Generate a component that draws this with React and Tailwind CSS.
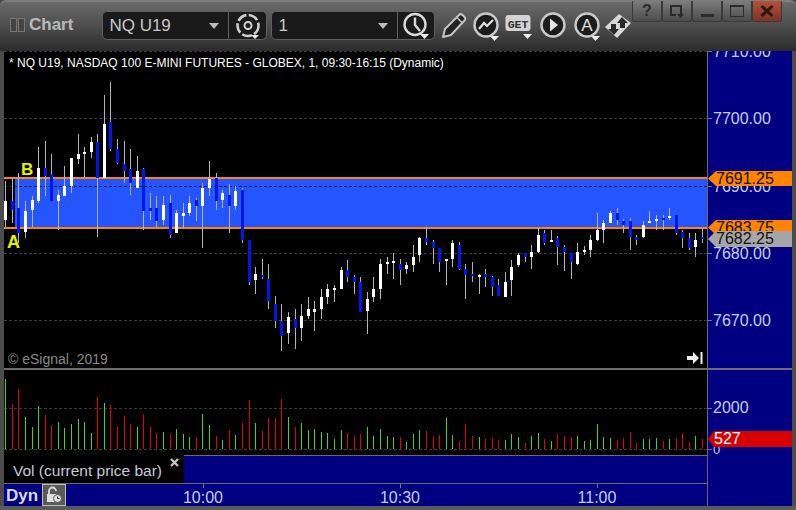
const W = 'w'
const B = 'b'

// read off the chart in crops: [wickTop, wickBottom, bodyTop, bodyBottom, colour]
const seg1 = [
  [303,440,363,420,W],[294,430,363,390,B],[279,490,384,459,B],[363,474,393,456,W],[348,442,360,390,W],
  [201,369,264,363,W],[183,348,264,288,B],[222,363,282,363,B],[331,450,345,363,W],[258,348,318,348,W],
  [234,340,234,318,W],[162,252,222,237,W],[201,292,216,222,W],[171,234,186,216,W],[162,471,186,294,B],
  [45,294,132,294,W],[6,213,126,207,B],[177,252,207,249,B],[183,309,252,273,B],[207,345,267,309,B],
  [228,324,273,324,W],[264,450,267,393,B],[339,420,384,393,B],[348,441,384,423,B],[348,435,375,420,W],
  [345,474,369,465,B],[390,459,399,459,W],[369,444,399,408,W],[348,408,369,399,W],[354,423,360,378,B],
  [309,504,324,378,W],[243,348,297,324,W],[279,390,294,363,B],[330,384,339,360,W],[312,459,345,378,B],
  [318,390,333,378,W],[324,489,330,480,B],
].map(([a, b, c, d, e]) => [80 + a / 3, 80 + b / 3, 80 + c / 3, 80 + d / 3, e])

const seg2 = [
  [210,345,210,336,B],[291,372,312,330,W],[267,327,315,321,B],[282,417,327,393,B],[378,474,402,453,B],
  [402,543,453,498,B],[426,522,441,489,W],[417,537,447,474,B],[402,513,438,474,W],[381,447,417,438,W],
  [393,483,417,426,W],[357,447,381,417,W],[342,402,357,381,W],[345,396,354,360,W],[291,357,300,357,W],
  [270,336,300,321,B],[315,372,321,336,B],[321,426,336,426,B],[366,492,387,423,W],[321,396,357,381,W],
  [267,387,282,357,W],[261,312,276,282,W],[249,327,273,279,W],[267,345,282,300,B],[276,312,285,297,W],
  [225,306,261,285,W],[201,276,204,255,W],[171,225,204,216,B],[210,282,216,234,B],[234,306,234,276,B],
  [267,345,267,273,W],[210,291,219,267,W],[216,300,225,297,B],[282,387,297,315,B],[276,336,312,318,B],
  [312,372,315,321,W],[297,351,312,321,B],[318,378,321,351,B],[327,378,345,378,B],[306,378,336,381,W],
  [270,378,291,330,W],
].map(([a, b, c, d, e]) => [170 + a / 3, 170 + b / 3, 170 + c / 3, 170 + d / 3, e])

const seg3 = [
  [249,291,255,285,W],[249,276,249,261,B],[225,297,246,261,W],[174,249,195,246,W],[180,225,189,219,B],
  [180,216,210,216,W],[198,285,204,231,B],[225,303,231,246,B],[249,327,249,276,B],[219,285,246,282,W],
  [228,255,240,246,W],[195,261,210,240,W],[129,213,180,210,W],[150,219,159,180,W],[123,159,129,159,W],
  [114,165,129,150,B],[147,189,153,165,B],[144,240,153,201,B],[195,225,201,210,B],[153,204,165,201,W],
  [123,159,153,159,W],[135,180,147,153,W],[135,180,144,150,B],[114,150,138,144,W],[135,195,135,189,B],
  [180,234,186,204,B],[189,240,204,234,B],[189,261,210,231,W],[174,219,201,207,B],
].map(([a, b, c, d, e]) => [170 + a / 3, 170 + b / 3, 170 + c / 3, 170 + d / 3, e])

const candles = [...seg1, ...seg2, ...seg3]

const vol = [
  [118,'g'],[192,'r'],[148,'r'],[232,'g'],[261,'g'],[198,'g'],[225,'r'],[255,'r'],[246,'g'],[264,'g'],
  [252,'g'],[237,'g'],[246,'g'],[279,'g'],[171,'r'],[189,'g'],[195,'r'],[261,'r'],[228,'r'],[252,'r'],
  [261,'g'],[222,'r'],[261,'r'],[279,'r'],[276,'g'],[282,'r'],[267,'g'],[282,'g'],[291,'g'],[291,'r'],
  [222,'g'],[255,'g'],[288,'r'],[300,'g'],[270,'r'],[285,'g'],[249,'r'],[180,'r'],[249,'g'],[273,'r'],
  [234,'r'],[234,'r'],[177,'r'],[231,'g'],[261,'r'],[249,'g'],[270,'g'],[267,'g'],[276,'g'],[279,'g'],
  [297,'g'],[270,'g'],[279,'r'],[288,'r'],[282,'r'],[261,'g'],[288,'g'],[267,'g'],[288,'g'],[291,'g'],
  [291,'r'],[306,'g'],[282,'g'],[270,'g'],[273,'r'],[288,'r'],[285,'r'],[234,'g'],[285,'g'],[303,'r'],
  [252,'r'],[288,'r'],[291,'g'],[297,'r'],[294,'r'],[300,'r'],[300,'g'],[282,'g'],[291,'g'],[309,'r'],
  [288,'g'],[279,'g'],[297,'r'],[303,'g'],[282,'r'],[288,'r'],[291,'r'],[288,'g'],[303,'g'],[300,'g'],
  [252,'g'],[291,'g'],[294,'g'],[300,'r'],[294,'r'],[276,'r'],[309,'r'],[297,'g'],[297,'g'],[294,'g'],
  [303,'r'],[297,'g'],[294,'r'],[279,'r'],[306,'r'],[288,'g'],[297,'r'],
]

const col = (i) => Math.floor(5.8 + 6.5733 * i)
const fr = (n) => Math.round(n)

function CircleBtn({ children, className }) {
  return (
    <svg width="28" height="30" viewBox="0 0 28 30" className={className}>
      <circle cx="13" cy="13" r="11.5" fill="#1c1c1c" stroke="#c9c9c9" strokeWidth="2.4" />
      {children}
      <path d="M17 24h9l-4.5 5z" fill="#eee" />
    </svg>
  )
}

function Tag({ top, bg, text, color = 'text-[#111]', h = 'h-[15px]', arrow = 'w-[8px]' }) {
  return (
    <div className={`absolute left-0 right-0 flex items-center ${h}`} style={{ top }}>
      <svg viewBox="0 0 9 15" className={`h-full shrink-0 ${arrow}`} preserveAspectRatio="none">
        <path d="M0 7.5 9 0v15z" fill={bg} />
      </svg>
      <div className={`flex h-full flex-1 items-center overflow-hidden text-[16px] ${color}`} style={{ background: bg }}>
        {text}
      </div>
    </div>
  )
}

function WinBtn({ children, red }) {
  return (
    <div
      className={`flex h-[21px] w-[30px] items-center justify-center rounded-b-[3px] border border-t-0 border-[#3a3a3a] ${
        red ? 'bg-gradient-to-b from-[#b5523c] to-[#7e3324]' : 'bg-gradient-to-b from-[#7c7c7c] to-[#4c4c4c]'
      }`}
    >
      {children}
    </div>
  )
}

function AxisLabel({ y, children }) {
  return (
    <div className="absolute left-[5px] flex h-[18px] items-center text-[16px] leading-none text-[#c6cde6]" style={{ top: y - 9 }}>
      {children}
    </div>
  )
}

function Tick({ y }) {
  return <div className="absolute left-0 h-px w-[4px] bg-[#777]" style={{ top: y }} />
}

export default function App() {
  return (
    <div className="flex h-[510px] w-[796px] flex-col overflow-hidden bg-[#4c4c4c] font-['Liberation_Sans',Arial,sans-serif]">
      {/* title bar */}
      <div className="relative flex h-[51px] shrink-0 items-start rounded-t-[6px] border-t-2 border-[#7d7d7d] bg-gradient-to-b from-[#6a6a6a] via-[#4d4d4d] to-[#2b2b2b]">
        <div className="ml-[10px] mt-[16px] flex gap-[1px]">
          <div className="h-[14px] w-[7px] border border-[#777] bg-[#444]" />
          <div className="h-[14px] w-[7px] border border-[#777] bg-[#444]" />
        </div>
        <div className="ml-[4px] mt-[13px] text-[17px] font-bold leading-[20px] text-[#b9b9b9]">Chart</div>

        <div className="ml-[29px] mt-[9px] flex h-[29px] w-[165px] items-stretch rounded-[5px] border border-[#5f5f5f] bg-[#1a1a1a]">
          <div className="flex w-[126px] items-center justify-between border-r border-[#5f5f5f] pl-[6px] pr-[9px] text-[17px] text-[#c9c9c9]">
            NQ U19
            <svg width="10" height="6" viewBox="0 0 10 6"><path d="M0 0h10L5 6z" fill="#bbb" /></svg>
          </div>
          <div className="flex flex-1 items-center justify-center">
            <svg width="26" height="26" viewBox="0 0 26 26">
              <circle cx="13" cy="12.5" r="10.5" fill="none" stroke="#d0d0d0" strokeWidth="2.6" strokeDasharray="10 2.5" />
              <circle cx="13" cy="12.5" r="3.5" fill="none" stroke="#d0d0d0" strokeWidth="2" />
              <path d="M16 22h8l-4 4z" fill="#eee" />
            </svg>
          </div>
        </div>

        <div className="ml-[4px] mt-[9px] flex h-[29px] w-[164px] items-stretch rounded-[5px] border border-[#5f5f5f] bg-[#1a1a1a]">
          <div className="flex w-[126px] items-center justify-between border-r border-[#5f5f5f] pl-[6px] pr-[9px] text-[17px] text-[#c9c9c9]">
            1
            <svg width="10" height="6" viewBox="0 0 10 6"><path d="M0 0h10L5 6z" fill="#bbb" /></svg>
          </div>
          <div className="flex flex-1 items-center justify-center">
            <svg width="30" height="28" viewBox="0 0 30 28">
              <circle cx="14" cy="12.5" r="10.5" fill="none" stroke="#d8d8d8" strokeWidth="2.4" />
              <path d="M14 5.5V13l5 6" fill="none" stroke="#d8d8d8" strokeWidth="2.4" />
              <path d="M19 22h9l-4.5 5z" fill="#eee" />
            </svg>
          </div>
        </div>

        <svg width="28" height="28" viewBox="0 0 28 28" className="ml-[5px] mt-[10px]">
          <path d="M3 25l2-8L19 3c1-1 2.500-1 3.500 0l2 2c1 1 1 2.500 0 3.500L11 23z" fill="#222" stroke="#c4c4c4" strokeWidth="2" strokeLinejoin="round" />
          <path d="M17 5.500l5.500 5.500" stroke="#c4c4c4" strokeWidth="1.500" />
        </svg>

        <CircleBtn className="ml-[5px] mt-[10px]">
          <path d="M6 17l5-6 3 3 6-6" fill="none" stroke="#e0e0e0" strokeWidth="2.2" />
        </CircleBtn>

        <svg width="30" height="30" viewBox="0 0 30 30" className="ml-[4px] mt-[10px]">
          <rect x="0.500" y="3" width="25" height="16" rx="3" fill="#d2d2d2" />
          <text x="13" y="15.500" textAnchor="middle" fontSize="11.500" fontWeight="700" fontFamily="Liberation Mono, monospace" fill="#333">GET</text>
          <path d="M18 22h9l-4.500 5z" fill="#eee" />
        </svg>

        <svg width="28" height="28" viewBox="0 0 28 28" className="ml-[5px] mt-[10px]">
          <circle cx="13" cy="13" r="11.500" fill="#1c1c1c" stroke="#c9c9c9" strokeWidth="2.400" />
          <path d="M10 6.500l8 6.500-8 6.500z" fill="#e4e4e4" />
        </svg>

        <CircleBtn className="ml-[6px] mt-[10px]">
          <text x="13" y="19" textAnchor="middle" fontSize="17" fontFamily="Liberation Sans, sans-serif" fill="#e0e0e0">A</text>
        </CircleBtn>

        <svg width="28" height="26" viewBox="0 0 28 26" className="ml-[2px] mt-[11px]">
          <path d="M1 14 15 1l12 9-14 15z" fill="#d8d8d8" />
          <path d="M18 4l6 6h-3v5h-5v-5h-3z" fill="#2a2a2a" />
          <path d="M10 22l-6-6h3v-5h5v5h3z" fill="#2a2a2a" />
        </svg>

        {/* window buttons */}
        <div className="absolute left-[632px] top-[-1px] flex">
          <WinBtn><span className="text-[16px] font-bold leading-none text-[#2b2b2b]">?</span></WinBtn>
          <WinBtn>
            <svg width="16" height="15" viewBox="0 0 16 15">
              <path d="M12 10V2H2v9h5" fill="none" stroke="#2b2b2b" strokeWidth="2" />
              <path d="M8 10h7l-3.500 4z" fill="#2b2b2b" />
            </svg>
          </WinBtn>
          <WinBtn><div className="mt-[8px] h-[3px] w-[13px] bg-[#2b2b2b]" /></WinBtn>
          <WinBtn><div className="h-[12px] w-[14px] border border-t-2 border-[#2b2b2b]" /></WinBtn>
          <WinBtn red>
            <svg width="14" height="12" viewBox="0 0 14 12"><path d="M1.500 1 12.500 11M12.500 1 1.500 11" stroke="#2d1712" strokeWidth="3" /></svg>
          </WinBtn>
        </div>
      </div>

      <div className="flex flex-1 pl-[4px] pr-[4px]">
        <div className="flex flex-1 flex-col">
          {/* price panel */}
          <div className="flex h-[317px] shrink-0">
            <div className="relative h-full w-[703px] shrink-0 overflow-hidden bg-black">
              <svg width="703" height="317" viewBox="4 51 703 317" shapeRendering="crispEdges" className="block">
                <rect x="15" y="179" width="692" height="48" fill="#2455ff" />
                {[51, 118, 186, 253, 320].map((y) => (
                  <line key={y} x1="4" x2="707" y1={y + 0.5} y2={y + 0.5} stroke={y === 186 ? '#222' : '#3a3a3a'} strokeDasharray="3 2" />
                ))}
                <rect x="4" y="177" width="703" height="2" fill="#ff8400" />
                <rect x="4" y="227" width="703" height="2" fill="#ff8400" />
                {candles.map(([wt, wb, bt, bb, c], i) => {
                  const x = col(i)
                  return (
                    <g key={i}>
                      <rect x={x} y={fr(wt)} width="1" height={fr(wb) - fr(wt)} fill="#b4b4b4" />
                      <rect x={x - 1} y={fr(bt)} width="3" height={Math.max(fr(bb) - fr(bt), 2)} fill={c === W ? '#fff' : '#0018e6'} />
                    </g>
                  )
                })}
              </svg>
              <div className="absolute left-[5px] top-[5px] text-[12px] leading-[14px] text-white">
                * NQ U19, NASDAQ 100 E-MINI FUTURES - GLOBEX, 1, 09:30-16:15 (Dynamic)
              </div>
              <div className="absolute left-[17px] top-[109px] text-[17px] font-bold leading-[20px] text-[#e6f000]">B</div>
              <div className="absolute left-[3px] top-[181px] text-[18px] font-bold leading-[20px] text-[#e6f000]">A</div>
              <div className="absolute bottom-[1px] left-[4px] text-[14px] leading-[16px] text-[#8a8a8a]">© eSignal, 2019</div>
              <svg width="16" height="14" viewBox="0 0 16 14" className="absolute bottom-[3px] right-[4px]">
                <path d="M0 5h6V1l6 6-6 6V9H0z" fill="#eee" />
                <rect x="13.500" y="1" width="2" height="12" fill="#eee" />
              </svg>
            </div>
            <div className="relative h-full flex-1 overflow-hidden border-l border-[#6a6a6a] bg-[#000080]">
              {[118, 186, 253, 320].map((y) => <Tick key={y} y={y - 51} />)}
              <Tick y={0} />
              <AxisLabel y={1}>7710.00</AxisLabel>
              <AxisLabel y={68}>7700.00</AxisLabel>
              <AxisLabel y={136}>7690.00</AxisLabel>
              <AxisLabel y={203}>7680.00</AxisLabel>
              <AxisLabel y={270}>7670.00</AxisLabel>
              <Tag top={120} bg="#ff8400" text="7691.25" />
              <Tag top={169} bg="#ff8400" text="7683.75" />
              <Tag top={180} bg="#a6a6a8" text="7682.25" h="h-[16px]" />
            </div>
          </div>

          <div className="h-[2px] shrink-0 bg-[#6e6e6e]" />

          {/* volume panel */}
          <div className="flex flex-1">
            <div className="flex w-[703px] shrink-0 flex-col">
              <svg width="703" height="85" viewBox="4 370 703 85" shapeRendering="crispEdges" className="block shrink-0 bg-black">
                {[408, 449].map((y) => (
                  <line key={y} x1="4" x2="707" y1={y + 0.5} y2={y + 0.5} stroke="#3a3a3a" strokeDasharray="3 2" />
                ))}
                {vol.map(([t, c], i) => {
                  const top = Math.round(340 + t / 3)
                  return <rect key={i} x={col(i)} y={top} width="1" height={449 - top} fill={c === 'g' ? '#45d612' : '#e80000'} />
                })}
              </svg>
              <div className="flex h-[29px] shrink-0 border-b border-[#6a6a6a]">
                <div className="relative w-[180px] shrink-0 bg-black">
                  <div className="pl-[9px] pt-[7px] text-[15.5px] leading-[17px] text-[#c8cbd6]">Vol (current price bar)</div>
                  <svg width="9" height="9" viewBox="0 0 9 9" className="absolute right-[5px] top-[3px]">
                    <path d="M1 1l7 7M8 1 1 8" stroke="#c4c4c4" strokeWidth="2.400" />
                  </svg>
                </div>
                <div className="flex-1 border-t border-[#6a6a6a] bg-[#000080]" />
              </div>
              <div className="relative h-[22px] shrink-0 bg-[#000080]">
                <div className="flex h-full items-center pl-[2px]">
                  <span className="text-[17px] font-bold leading-none text-[#d8d8d8]">Dyn</span>
                  <div className="ml-[4px] flex h-[22px] w-[24px] items-center justify-center border border-[#bdbdbd] bg-[#5a5a5a]">
                    <svg width="18" height="18" viewBox="0 0 18 18">
                      <path d="M4 8V5a3.500 3.500 0 0 1 7 0" fill="none" stroke="#ddd" strokeWidth="1.800" />
                      <rect x="2" y="8" width="9" height="8" fill="#ddd" />
                      <circle cx="12.500" cy="12.500" r="4" fill="#ddd" stroke="#5a5a5a" />
                      <path d="M12.500 10.500v2h2" fill="none" stroke="#333" />
                    </svg>
                  </div>
                </div>
                {[['10:00', 199], ['10:30', 396], ['11:00', 593]].map(([t, x]) => (
                  <div key={t} className="absolute top-0 w-0" style={{ left: x }}>
                    <div className="h-[4px] w-px bg-[#777]" />
                    <div className="absolute left-[-30px] top-[5px] w-[60px] text-center text-[16px] leading-[18px] text-[#c6cde6]">{t}</div>
                  </div>
                ))}
              </div>
            </div>
            <div className="relative flex-1 border-l border-[#6a6a6a] bg-[#000080]">
              <Tick y={38} />
              <Tick y={79} />
              <AxisLabel y={38}>2000</AxisLabel>
              <div className="absolute left-[5px] top-[73px] text-[13px] leading-[14px] text-[#c6cde6]">0</div>
              <Tag top={61} bg="#d80000" text="527" color="text-white" h="h-[16px]" arrow="w-[6px]" />
            </div>
          </div>
        </div>
      </div>
      <div className="h-[4px] shrink-0 bg-[#5a5a5a]" />
    </div>
  )
}
